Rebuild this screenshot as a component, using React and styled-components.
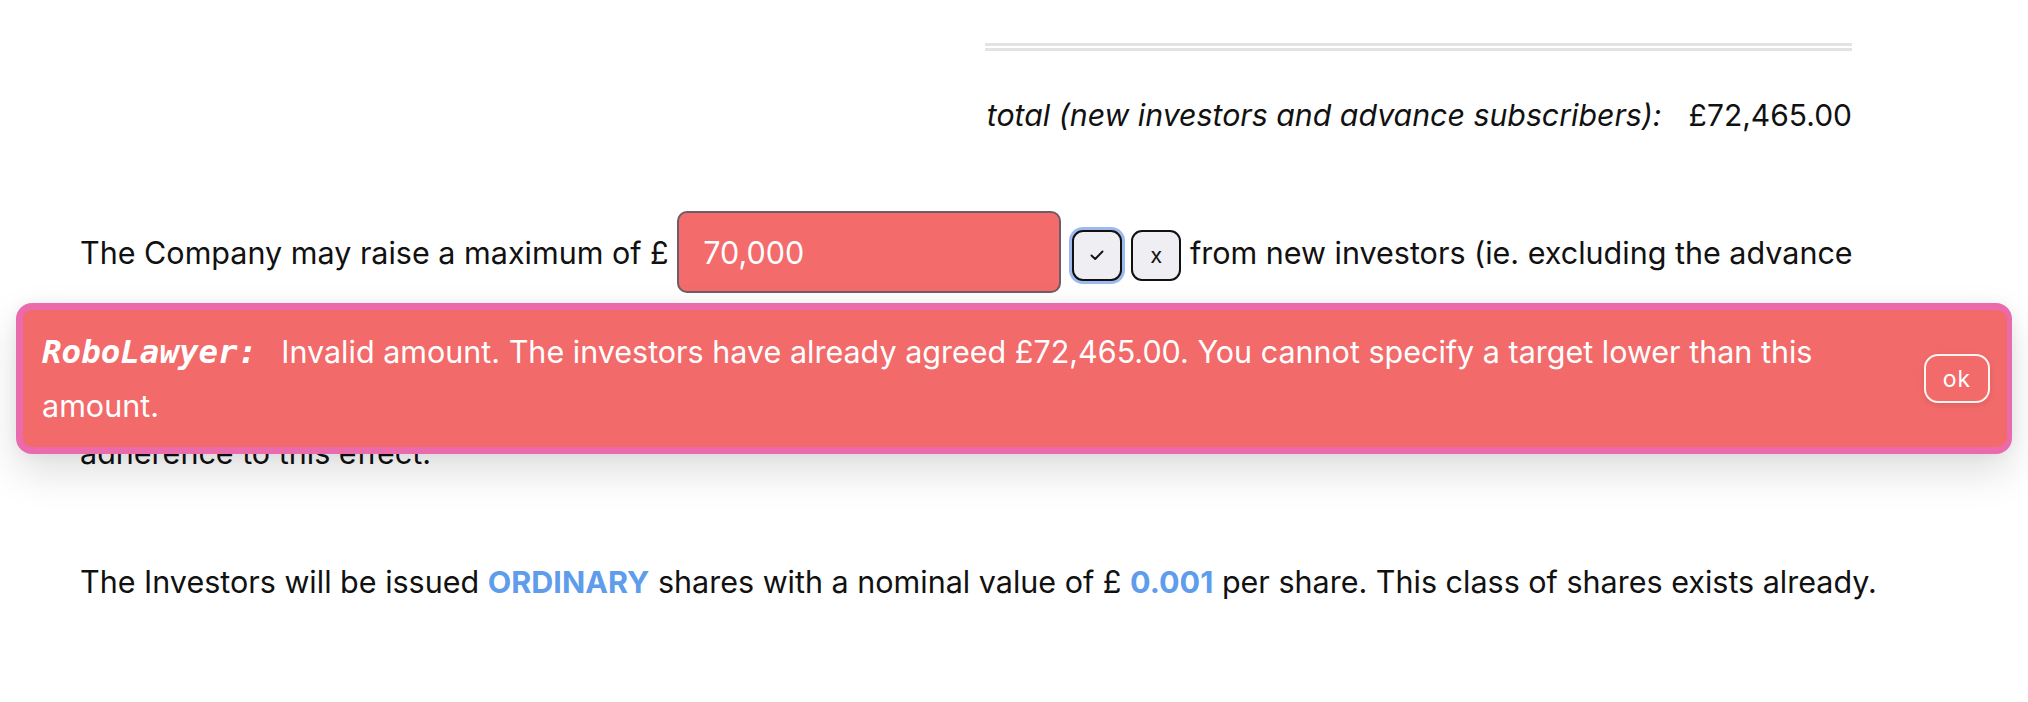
import React from 'react';
import styled, { createGlobalStyle } from 'styled-components';

const GlobalStyle = createGlobalStyle`
  body {
    margin: 0;
    background: #fff;
    font-family: Inter, "Noto Sans", sans-serif;
    color: #111;
  }
`;

const Page = styled.div`
  position: relative;
  height: 702px;
  box-sizing: border-box;
  padding: 43px 140px 0 80px;
  font-size: 30.5px;
  overflow: hidden;
`;

const Summary = styled.div`
  width: 867px;
  margin: 0 36px 0 auto;
  padding-top: 44px;
  border-top: 8px double #e3e3e6;
  display: flex;
  justify-content: flex-end;
  align-items: baseline;
  line-height: 40px;
  white-space: nowrap;
`;

const SummaryLabel = styled.span`
  font-style: italic;
  font-size: 30.3px;
`;

const SummaryAmount = styled.span`
  margin-left: 27px;
  font-size: 30px;
`;

const Paragraph = styled.p`
  margin: ${p => p.$top}px 0 0;
  line-height: 64px;
`;

const AmountInput = styled.input`
  box-sizing: border-box;
  width: 384px;
  height: 82px;
  padding: 0 24px;
  border: 2px solid #6f5c66;
  border-radius: 10px;
  background: #f36b6b;
  color: #fff;
  font: inherit;
  font-size: 30.5px;
  outline: none;
`;

const SmallButton = styled.button`
  box-sizing: border-box;
  width: 50px;
  height: 51px;
  margin-left: ${p => p.$gap}px;
  padding: 0;
  border: 2px solid #111;
  border-radius: 11px;
  background: #efeff3;
  color: #111;
  font-family: Inter, sans-serif;
  font-size: 22px;
  vertical-align: middle;
  display: inline-flex;
  align-items: center;
  justify-content: center;
  box-shadow: ${p => (p.$focused ? '0 0 0 3px #9db9ee' : 'none')};
`;

const Highlight = styled.strong`
  color: #5e9cec;
  font-weight: 700;
`;

const Toast = styled.div`
  position: absolute;
  top: 303px;
  left: 16px;
  width: 1996px;
  height: 151px;
  box-sizing: border-box;
  border: 7px solid #eb6aab;
  border-right-width: 5px;
  border-radius: 16px;
  background: #f36a6a;
  box-shadow: 0 18px 40px rgba(0, 0, 0, 0.13), 0 0 14px rgba(0, 0, 0, 0.05);
  display: flex;
  align-items: center;
  padding: 0 17px 0 19px;
  color: #fff;
`;

const Message = styled.div`
  flex: 1;
  max-width: 1790px;
  font-size: 30.5px;
  line-height: 53px;
`;

const Speaker = styled.span`
  font-family: "DejaVu Sans Mono", "Liberation Mono", monospace;
  font-weight: 700;
  font-style: italic;
  font-size: 32.5px;
  margin-right: 24px;
`;

const OkButton = styled.button`
  box-sizing: border-box;
  width: 66px;
  height: 49px;
  margin-left: auto;
  border: 2px solid #fff4ef;
  border-radius: 14px;
  background: transparent;
  color: #fff;
  font-family: Inter, sans-serif;
  font-size: 23px;
  letter-spacing: 1px;
  box-shadow: 0 2px 6px rgba(0, 0, 0, 0.1);
`;

const CheckIcon = () => (
  <svg width="14" height="11" viewBox="0 0 14 11" fill="none">
    <polyline points="1.5,5.5 5.2,9 12.5,1.5" stroke="#111" strokeWidth="1.9" strokeLinecap="round" strokeLinejoin="round" />
  </svg>
);

export default function App() {
  return (
    <>
      <GlobalStyle />
      <Page>
        <Summary>
          <SummaryLabel>total (new investors and advance subscribers):</SummaryLabel>
          <SummaryAmount>£72,465.00</SummaryAmount>
        </Summary>

        <Paragraph $top={76}>
          The Company may raise a maximum of £ <AmountInput defaultValue="70,000" />
          <SmallButton $gap={11} $focused><CheckIcon /></SmallButton>
          <SmallButton $gap={9}>x</SmallButton> from new investors (ie. excluding the advance<br />
          subscribers) on the terms of this agreement, and the Directors shall confirm<br />
          to the Investors before completion that they have procured the Company's<br />
          adherence to this effect.
        </Paragraph>

        <Paragraph $top={65}>
          The Investors will be issued <Highlight>ORDINARY</Highlight> shares with a nominal value of £ <Highlight>0.001</Highlight> per share. This class of shares exists already.
        </Paragraph>

        <Toast>
          <Message>
            <Speaker>RoboLawyer:</Speaker>
            Invalid amount. The investors have already agreed £72,465.00. You cannot specify a target lower than this amount.
          </Message>
          <OkButton>ok</OkButton>
        </Toast>
      </Page>
    </>
  );
}
